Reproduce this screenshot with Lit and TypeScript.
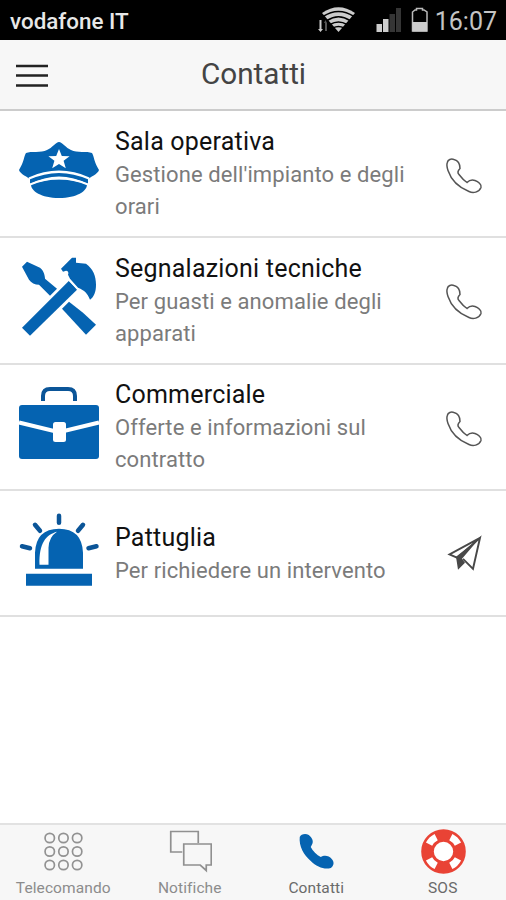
import { LitElement, html, css, svg } from "lit";
import { customElement, property } from "lit/decorators.js";

const HANDSET = "M447.300 162C448 159 451 158 454 159C458 160 460 164 460 168C458 170 457 172 459 174C462 178 464 180 467 182C469 180 472 179 475 180C478 181 482 184 481 187C479 192 473 193 469 191C459 187 451 179 448 170C447 167 446.500 164 447.300 162Z";

const icons: Record<string, unknown> = {
  cap: html`<svg width="80" height="80" viewBox="19 134 80 80">
    <path fill="#0563b1" d="M59 142C62 142 66 148 71 150C77 153 87 151 92 153C94 156 94 162 99 170C98 174 90 177 87 180C71 169 47 169 31 180C28 177 20 174 19 170C24 162 24 156 26 153C31 151 41 153 47 150C52 148 56 142 59 142Z"/>
    <path fill="#fff" d="m59 149 2.800 6.900 7.800.3-6 4.600 2.200 7.500-6.800-4.300-6.800 4.300 2.200-7.500-6-4.600 7.800-.3Z"/>
    <path fill="#0563b1" d="M30 179Q59 164 88 179V184Q59 169 30 184Z"/>
    <path fill="none" stroke="#fff" stroke-width="2.400" d="M29 178.500Q59 165 89 178.500"/>
    <path fill="#0563b1" d="M31 184.500Q59 174 87 184.500C87 191 77 198 59 198C41 198 31 191 31 184.500Z"/>
    <path fill="none" stroke="#fff" stroke-width="2" d="M30 184.500Q59 172.500 88 184.500"/>
  </svg>`,
  tools: html`<svg width="80" height="80" viewBox="19 260.200 80 80" overflow="visible">
    <g fill="#0563b1">
      <path d="M22 267 27 262 40 268C43 270 45 275 45 279L57 289 50 296 39 285C35 285 31 283 29 280Z"/>
      <path d="M62 309 69 302 83 313 96 325 86 335Z"/>
      <path d="M22 328 69 281 77 290 30 336Z"/>
      <path d="M70 279 68 275C69 273 68 271 66 271L63 272 61 269 72 258 76 258V263L86 264C93 269 96 276 96 285C96 292 94 297 90 300C87 293 85 291 78 288Z"/>
    </g>
    <path fill="none" stroke="#fff" stroke-width="1.300" d="M69 280.500 77.500 289"/>
  </svg>`,
  bag: html`<svg width="80" height="80" viewBox="19 387 80 80" overflow="visible">
    <path fill="none" stroke="#0b5598" stroke-width="4" d="M43 401V396Q43 389 50 389H68Q75 389 75 396V401"/>
    <rect x="19" y="405" width="80" height="54" rx="3" fill="#0563b1"/>
    <path fill="none" stroke="#fff" stroke-width="4" d="M19 422.500 54 431H64L99 422.500"/>
    <rect x="53" y="422" width="13" height="20" rx="2.500" fill="#fff"/>
  </svg>`,
  siren: html`<svg width="80" height="80" viewBox="19 513.200 80 80" overflow="visible">
    <path fill="#0563b1" d="M35 569V553Q36 529 59 529Q82 529 83 553V569ZM26 574H92V586H26Z"/>
    <path fill="#fff" d="M57 532C46 535 39 543 39.500 565H48.500V548Q49 537 57 532Z"/>
    <path fill="none" stroke="#0b5598" stroke-width="4.500" stroke-linecap="round" d="M59 516V523M35 525 40 531M83 525 78 531M22 546.500 30 548.500M96.500 546.500 88.500 548.500"/>
  </svg>`,
  call: html`<svg width="40" height="40" viewBox="444 155.500 40 40">
    <path fill="none" stroke="#555" stroke-width="1.500" d=${HANDSET} />
  </svg>`,
  send: html`<svg width="40" height="40" viewBox="444 535.200 40 40">
    <path fill="none" stroke="#484848" stroke-width="1.900" d="M480 538 449.500 554.500 457.500 558 480 538 473 569 463 559"/>
    <path fill="#484848" d="M480 538 456 557 458 570 465 563 462 559Z"/>
  </svg>`,
  keypad: html`<svg width="44" height="44" viewBox="41.250 830 44 44">
    ${[838, 851.5, 865].map((y) => [50, 63.700, 77.400].map((x) => svg`<circle cx=${x} cy=${y} r="4.700" fill="none" stroke="#929292" stroke-width="1.700"/>`))}
  </svg>`,
  chat: html`<svg width="44" height="44" viewBox="167.750 830 44 44">
    <path fill="none" stroke="#909090" stroke-width="1.700" d="M182 852H170.500V831.500H198V843M183.500 844H211V865H206V870.500L200 865H183.500Z"/>
  </svg>`,
  phone: html`<svg width="44" height="44" viewBox="294.250 830 44 44">
    <path fill="#0563b1" d="M300 837C301 834 306 833 309 835C313 838 314 842 312 845L311 847C313 851 317 855 321 857C324 855 329 855 332 859C335 862 334 866 331 868C325 870 317 867 311 861C304 855 299 846 300 837Z"/>
  </svg>`,
  sos: html`<svg width="46" height="46" viewBox="420 829 46 46">
    <circle cx="443.500" cy="851.500" r="16" fill="#fff" stroke="#e94335" stroke-width="12.600"/>
    <circle cx="443.500" cy="851.500" r="16.200" fill="none" stroke="#fff" stroke-width="7" pathLength="360" stroke-dasharray="36 54" stroke-dashoffset="-27"/>
  </svg>`,
};

@customElement("status-bar")
export class StatusBar extends LitElement {
  static styles = css`
    :host { display: flex; height: 40px; box-sizing: border-box; background: #000; align-items: center; padding: 2px 9px 0 10px; justify-content: space-between; font: 22px/30px Roboto, sans-serif; }
    .carrier { color: #e8e8e8; font-weight: 500; font-size: 22.400px; }
    .right { display: flex; align-items: center; }
    svg { display: block; margin-top: -2px; }
    .time { color: #c4c4c4; font-size: 25px; margin-left: 7px; padding-top: 1px; }
  `;
  render() {
    return html`<span class="carrier">vodafone IT</span>
      <div class="right">
        <svg width="112" height="30" viewBox="316 5 112 30">
          <path fill="#ccc" d="M319.500 20H321.500V29H323L320.500 32 318 29H319.500Z"/>
          <path fill="#555" d="M325 31V23H324L325.500 20 327 23V31Z"/>
          <path fill="#ccc" d="M338.500 32 322 13Q338.500 1.500 355 13Z"/>
          <path fill="none" stroke="#000" stroke-width="1.500" d="M323 16.500Q338.500 6.500 354 16.500M327 20.500Q338.500 13 350 20.500M330 24.500Q338.500 19.500 347 24.500M333 28Q338.500 25 344 28"/>
          <path fill="#ccc" d="M376.500 24H382V32H376.500ZM383 19H388.500V32H383Z"/>
          <path fill="#353535" d="M389.500 14H395V32H389.500ZM396 8H401V32H396Z"/>
          <path fill="none" stroke="#bbb" stroke-width="1.500" d="M412.500 31V12L415 10H416.500V8.500H422.500V10H424L427 12V31Z"/>
          <path fill="#ccc" d="M412.500 22H427V31.500H412.500Z"/>
        </svg>
        <span class="time">16:07</span>
      </div>`;
  }
}

@customElement("contact-row")
export class ContactRow extends LitElement {
  @property() icon = "";
  @property() heading = "";
  @property({ attribute: false }) lines: string[] = [];
  @property() action = "call";
  static styles = css`
    :host { display: flex; align-items: center; height: 126.400px; box-sizing: border-box; border-bottom: 2px solid #e0e0e0; padding: 0 22px 0 19px; font-family: Roboto, sans-serif; }
    svg { display: block; flex: none; }
    .text { flex: 1; margin-left: 16px; white-space: nowrap; padding-top: 1px; }
    .title { color: #111; font-size: 25px; line-height: 34px; letter-spacing: .21px; }
    .desc { color: #7b7b7b; font-size: 22px; line-height: 32px; letter-spacing: .1px; }
    .action { margin-top: 4px; }
  `;
  render() {
    return html`${icons[this.icon]}
      <div class="text">
        <div class="title">${this.heading}</div>
        ${this.lines.map((l) => html`<div class="desc">${l}</div>`)}
      </div>
      <div class="action">${icons[this.action]}</div>`;
  }
}

@customElement("app-root")
export class AppRoot extends LitElement {
  static styles = css`
    :host { display: flex; flex-direction: column; height: 900px; background: #fff; font-family: Roboto, sans-serif; overflow: hidden; }
    header { height: 71px; box-sizing: border-box; background: #f7f7f7; border-bottom: 2px solid #ccc; display: grid; grid-template-columns: 48px 1fr 48px; align-items: center; }
    .menu { margin: 3px 0 0 16px; display: block; }
    h1 { margin: 0 0 2px 1px; text-align: center; font-weight: 400; font-size: 29.700px; line-height: 40px; color: #444; }
    main { flex: 1; padding-top: .8px; }
    nav { height: 77px; box-sizing: border-box; border-top: 2px solid #e2e2e2; background: #f7f7f7; display: grid; grid-template-columns: repeat(4, 1fr); }
    .tab { display: flex; flex-direction: column; align-items: center; padding-top: 4px; color: #8c8c8c; font-size: 15.500px; letter-spacing: .1px; line-height: 20px; }
    .icon { height: 46px; display: flex; align-items: center; margin-bottom: 3px; }
    .dark { color: #6a6a6a; }
  `;
  render() {
    const rows = [
      { icon: "cap", heading: "Sala operativa", lines: ["Gestione dell'impianto e degli", "orari"], action: "call" },
      { icon: "tools", heading: "Segnalazioni tecniche", lines: ["Per guasti e anomalie degli", "apparati"], action: "call" },
      { icon: "bag", heading: "Commerciale", lines: ["Offerte e informazioni sul", "contratto"], action: "call" },
      { icon: "siren", heading: "Pattuglia", lines: ["Per richiedere un intervento"], action: "send" },
    ];
    const tabs = [["keypad", "Telecomando", ""], ["chat", "Notifiche", ""], ["phone", "Contatti", "dark"], ["sos", "SOS", "dark"]];
    return html`<status-bar></status-bar>
      <header>
        <svg class="menu" width="32" height="24" viewBox="16 64 32 24"><path stroke="#222" stroke-width="2.600" d="M16 66H48M16 75.500H48M16 85.500H48"/></svg>
        <h1>Contatti</h1>
      </header>
      <main>${rows.map((r) => html`<contact-row .icon=${r.icon} .heading=${r.heading} .lines=${r.lines} .action=${r.action}></contact-row>`)}</main>
      <nav>${tabs.map(([i, l, c]) => html`<div class="tab ${c}"><div class="icon">${icons[i]}</div><span>${l}</span></div>`)}</nav>`;
  }
}
